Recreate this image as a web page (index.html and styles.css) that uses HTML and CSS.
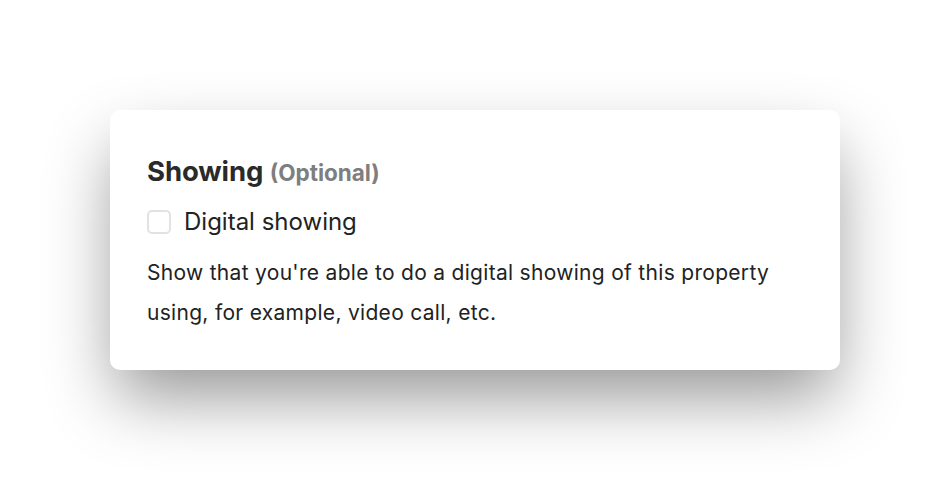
FILE: index.html
```html
<!DOCTYPE html>
<html>
<head>
<meta charset="utf-8">
<link rel="stylesheet" href="styles.css">
</head>
<body>
<div class="page">
  <div class="card">
    <h2 class="title">Showing <span class="optional">(Optional)</span></h2>
    <label class="check">
      <span class="box"></span>
      <span class="check-label">Digital showing</span>
    </label>
    <p class="desc">Show that you're able to do a digital showing of this property using, for example, video call, etc.</p>
  </div>
</div>
</body>
</html>
```

FILE: styles.css
```css
html, body {
  margin: 0;
  padding: 0;
  background: #ffffff;
}
body {
  font-family: Inter, "Noto Sans", sans-serif;
  color: #222222;
}
.page {
  box-sizing: border-box;
  min-height: 480px;
  padding: 110px 110px 0 110px;
}
.card {
  width: 730px;
  height: 260px;
  box-sizing: border-box;
  background: #ffffff;
  border-radius: 10px;
  box-shadow: 0 32px 68px -6px rgba(0, 0, 0, 0.42);
  padding: 44px 37px 0 37px;
}
.title {
  margin: 0;
  font-size: 27.5px;
  font-weight: 700;
  line-height: 34px;
  color: #2a2a2a;
  letter-spacing: -0.1px;
}
.optional {
  font-size: 22.5px;
  color: #7e7e7e;
  font-weight: 700;
  letter-spacing: 0;
}
.check {
  display: flex;
  align-items: center;
  gap: 13px;
  margin-top: 18px;
}
.box {
  width: 20px;
  height: 20px;
  border: 2px solid #e2e2e2;
  border-radius: 5px;
  background: #fff;
}
.check-label {
  font-size: 24px;
  line-height: 28px;
  color: #222;
}
.desc {
  margin: 17px 0 0 0;
  font-size: 21px;
  line-height: 40px;
  color: #222;
  letter-spacing: 0.3px;
}
```
